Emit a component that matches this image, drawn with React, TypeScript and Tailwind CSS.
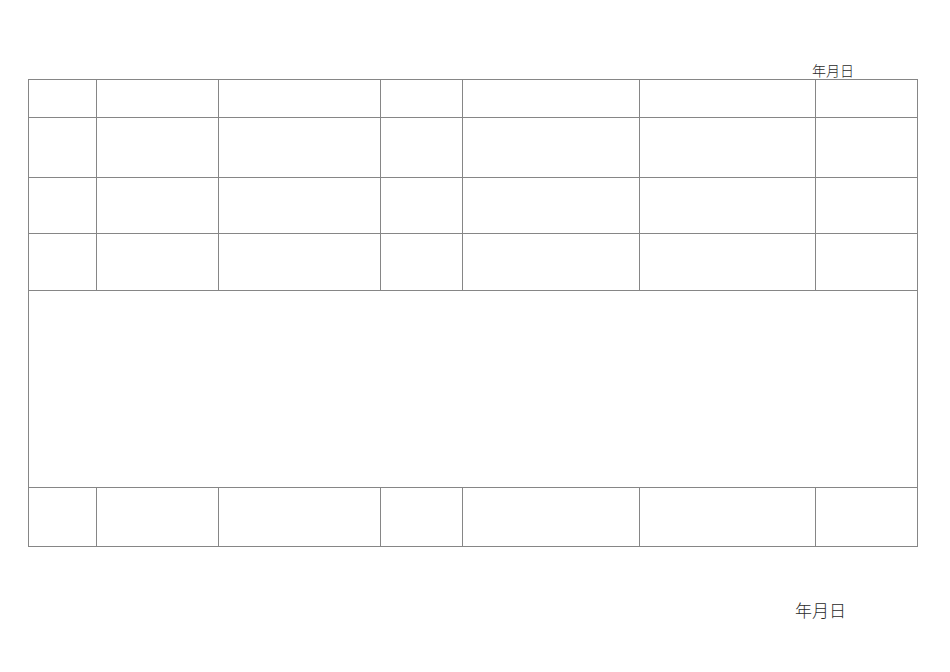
const cols = "grid-cols-[68px_122px_162px_82px_177px_176px_102px]"

const Row = ({ h }: { h: string }) => (
    <>
        {[0, 1, 2, 3, 4, 5, 6].map((i) => (
            <div key={i} className={`${h} border-r border-b border-[#868686]`}></div>
        ))}
    </>
)

const App = () => {
    return (
        <div className="w-[950px] h-[672px] bg-white text-[#2a2a2a]" style={{ fontFamily: '"Noto Sans CJK SC", "Noto Sans", sans-serif' }}>
            <div className="pt-[62px] flex justify-end pr-[96px]">
                <span className="text-[14px] leading-[17px] font-light">年月日</span>
            </div>
            <div className={`ml-[28px] w-[890px] grid ${cols} border-l border-t border-[#868686]`}>
                <Row h="h-[38px]" />
                <Row h="h-[60px]" />
                <Row h="h-[56px]" />
                <Row h="h-[57px]" />
                <div className="col-span-7 h-[197px] border-r border-b border-[#868686]"></div>
                <Row h="h-[59px]" />
            </div>
            <div className="mt-[53px] flex justify-end pr-[104px]">
                <span className="text-[17px] leading-[20px] font-light">年月日</span>
            </div>
        </div>
    )
}

export default App
